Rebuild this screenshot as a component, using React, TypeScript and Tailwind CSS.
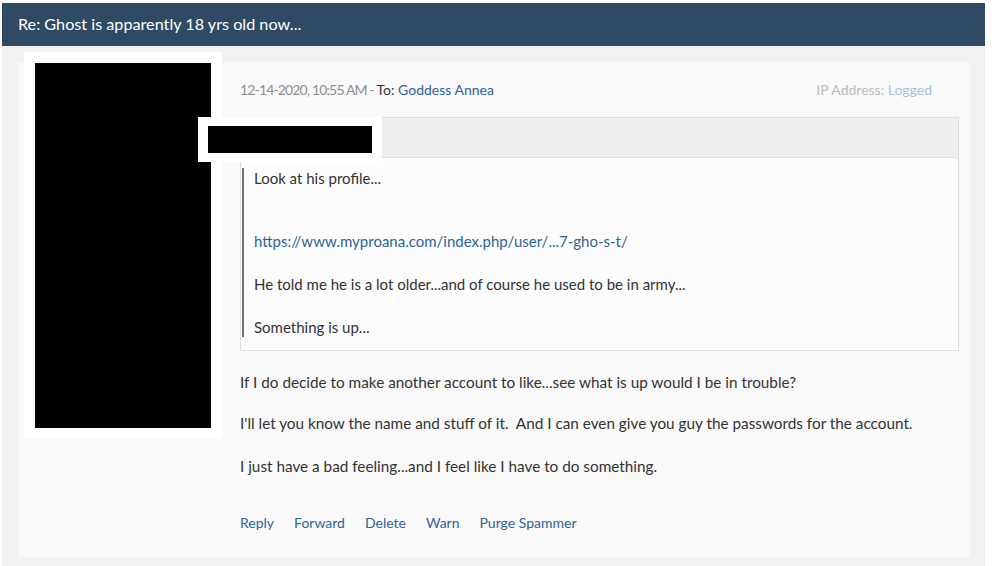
import React from "react";

export default function App() {
  const font = { fontFamily: "Lato, 'Noto Sans', Arial, sans-serif" };
  return (
    <div className="w-[1000px] h-[566px] overflow-hidden bg-white pt-[3px] pl-[2px]" style={font}>
      <div className="w-[983px]">
        <div className="h-[43px] bg-[#2f4a64] flex items-center pl-[16px] text-white text-[16.2px]">
          Re: Ghost is apparently 18 yrs old now...
        </div>
        <div className="bg-[#f2f2f2] pl-[16px] pr-[15px] pt-[16px] pb-[10px]">
          <div className="relative bg-[#f9f9f9] flex">
            <div className="w-[222px] shrink-0" />
            <div className="flex-1 pr-[11px] pt-[18px] pb-[24px] text-[14px] leading-[20px] text-[#333]">
              <div className="flex justify-between pr-[27px]">
                <div>
                  <span className="text-[#8e8e8e] tracking-[-0.85px]">12-14-2020, 10:55 AM - </span>
                  <span>To: </span>
                  <span className="text-[#2f6497]">Goddess Annea</span>
                </div>
                <div>
                  <span className="text-[#bdbdbd]">IP Address: </span>
                  <span className="text-[#a9c0da]">Logged</span>
                </div>
              </div>
              <div className="mt-[17px] border border-[#dedede]">
                <div className="h-[40px] bg-[#efefef] border-b border-[#dedede]" />
                <div className="bg-[#fcfcfc] pt-[10px] pb-[13px] pl-[1px] text-[15px]">
                  <div className="border-l-2 border-[#6f6f6f] pl-[10px]">
                    <p>Look at his profile...<br />&nbsp;</p>
                    <p className="mt-[23px] text-[#2f6497]">https://www.myproana.com/index.php/user/...7-gho-s-t/</p>
                    <p className="mt-[23px]">He told me he is a lot older...and of course he used to be in army...</p>
                    <p className="mt-[23px]">Something is up...</p>
                  </div>
                </div>
              </div>
              <div className="text-[15.3px]">
                <p className="mt-[21px]">If I do decide to make another account to like...see what is up would I be in trouble?</p>
                <p className="mt-[21px]">I'll let you know the name and stuff of it.&nbsp; And I can even give you guy the passwords for the account.</p>
                <p className="mt-[23px]">I just have a bad feeling...and I feel like I have to do something.</p>
              </div>
              <div className="mt-[37px] flex gap-[20px] text-[#2f6497]">
                <span>Reply</span>
                <span>Forward</span>
                <span>Delete</span>
                <span>Warn</span>
                <span>Purge Spammer</span>
              </div>
            </div>
            <div className="absolute left-[6px] top-[-10px] w-[198px] h-[387px] bg-white p-[11px]">
              <div className="w-full h-full bg-black" />
            </div>
            <div className="absolute left-[180px] top-[55px] w-[184px] h-[45px] bg-white px-[10px] py-[9px]">
              <div className="w-full h-full bg-black" />
            </div>
          </div>
        </div>
      </div>
    </div>
  );
}
